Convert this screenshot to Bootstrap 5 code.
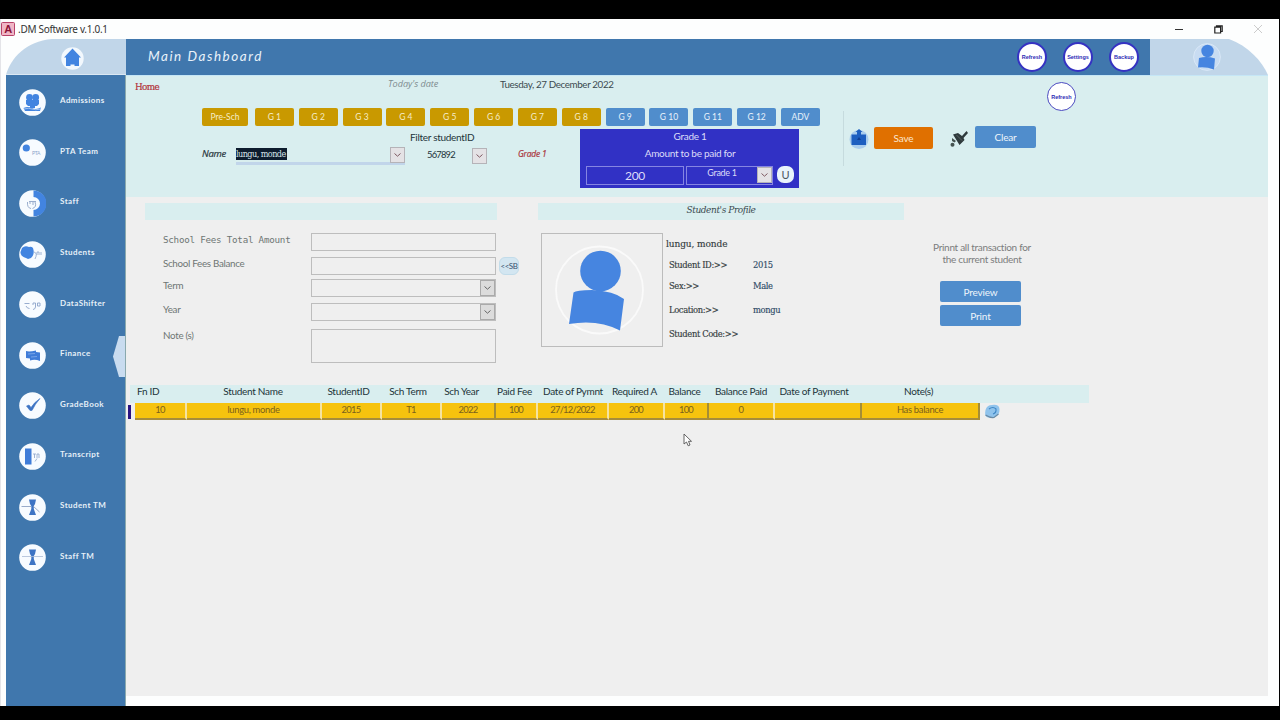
<!DOCTYPE html>
<html lang="en">
<head>
  <meta charset="UTF-8" />
  <meta name="viewport" content="width=device-width, initial-scale=1" />
  <title>.DM Software v.1.0.1</title>
  <link href="https://cdn.jsdelivr.net/npm/bootstrap@5.3.0/dist/css/bootstrap.min.css" rel="stylesheet" />
  <style>
    body {
      background: #000;
      font-family: Lato, "Open Sans", sans-serif;
      font-size: 10px;
      line-height: 13px;
      letter-spacing: -.3px;
      color: #3b4a50;
      height: 720px;
      padding-top: 19px;
      overflow: hidden;
      white-space: nowrap;
    }
    svg { display: block; flex: none; }
    .serif { font-family: "DejaVu Serif Condensed", "DejaVu Serif", serif; font-stretch: condensed; }
    .app-window {
      width: 1279px;
      height: 687px;
      background: #fdfefe;
      border-left: 1px solid #e4e4e8;
    }
    .title-bar { height: 20px; }
    .title-bar .app-name { font: 10px "Noto Sans", sans-serif; letter-spacing: -.3px; color: #333; margin-left: 3px; }
    .win-buttons { margin-right: 17px; gap: 31px; }
    .app-body { height: 667px; padding-left: 5px; }

    /* sidebar */
    .side-bar { width: 120px; background: #4077ad; border-right: 1px solid #8aa9ae; }
    .side-corner { background: #fdfefe; height: 36px; width: 120px; }
    .side-home {
      height: 36px;
      background: #c1d6e9;
      border-bottom: 1px solid #dbe8f3;
      clip-path: path("M0 36 C4 20 20 2 46 0 L120 0 L120 36 Z");
      padding-left: 12px;
      padding-top: 3px;
    }
    .side-list { padding-top: 2px; }
    .side-item { height: 50.6px; padding-left: 13px; position: relative; }
    .side-item span {
      font: bold 8px "Lato", sans-serif;
      letter-spacing: .42px;
      color: #e6f0f8;
      margin-left: 14px;
      margin-bottom: 4px;
    }
    .side-item .active-tab { position: absolute; right: 0; top: 6px; }

    /* header */
    .main-col { width: 1142px; }
    .top-bar { height: 36px; background: #4077ad; padding-right: 11px; }
    .top-bar h1 {
      font: italic 13.5px "Lato", sans-serif;
      letter-spacing: 1.55px;
      color: #e9f2fa;
      padding-left: 22px;
      margin: 0 auto 3px 0;
    }
    .round-btn {
      width: 30px;
      height: 30px;
      border: 2px solid #3532c2;
      border-radius: 50%;
      background: #fff;
      color: #2d2bb5;
      font: bold 5.5px "Liberation Sans", sans-serif;
      padding: 0;
    }
    .round-btn.thin { border: 1.5px solid #4a4ac0; width: 29px; height: 29px; }
    .user-corner {
      width: 118px;
      height: 36px;
      background: #c1d6e9;
      clip-path: path("M0 0 L79 0 C98 7 112 22 118 36 L0 36 Z");
      padding-right: 4px;
    }

    /* filter panel */
    .filter-panel { height: 122px; background: #d9eeef; border-top: 1px solid #c5e6f6; }
    .filter-left { width: 717px; }
    .crumb-row { height: 32px; }
    .home-link { color: #b23038; font-size: 9.8px; width: 262px; padding: 4px 0 0 9px; letter-spacing: -.6px; -webkit-text-stroke: .2px; }
    .today-label { font: italic 9.2px/13px "Open Sans", sans-serif; letter-spacing: -.05px; color: #7e8c90; width: 112px; padding-top: 1px; }
    .today-date { font-size: 9.8px; letter-spacing: -.37px; padding-top: 2px; }
    .grade-row { padding-left: 76px; gap: 4.85px; }
    .grade-btn {
      width: 39px;
      height: 18px;
      border-radius: 2px;
      background: #c99900;
      color: #f5ecc9;
      font-size: 8.5px;
      line-height: 18px;
      padding: 0;
      border: 0;
    }
    .grade-btn:first-child { width: 46px; margin-right: 2px; }
    .grade-btn.senior { background: #508dcc; color: #e8f2fb; }
    .filter-row { padding: 3px 0 0 76px; }
    .name-label { font: italic 9.5px/13px "Open Sans", sans-serif; color: #27343a; width: 34px; margin-top: 18px; -webkit-text-stroke: .2px; }
    .name-combo { width: 169px; height: 18px; margin-top: 18px; border-bottom: 3px solid #c1d5ea; }
    .name-combo .picked { background: #0d1c2e; color: #d9e4ea; font-size: 9px; line-height: 12px; letter-spacing: -.55px; height: 12px; margin-top: 1px; width: 51px; }
    .drop-btn {
      width: 15px;
      height: 16px;
      background: #e4e2e5;
      border: 1px solid #b5b3b8;
      padding: 0;
    }
    .id-filter { margin-left: 5px; width: 107px; padding-top: 2px; color: #22343a; }
    .id-filter .id-value { font-size: 9.4px; letter-spacing: -.8px; width: 62px; padding: 4px 0 0 17px; }
    .grade-mark { font: italic 8.5px/13px "Open Sans", sans-serif; letter-spacing: -.2px; color: #a9343c; width: 63px; margin-top: 18px; padding-left: 1px; -webkit-text-stroke: .2px; }
    .amount-box { width: 219px; height: 59px; background: #3131c5; color: #dcdcf8; text-align: center; padding: 1px 5px 0 6px; }
    .amount-box .amount-line { line-height: 12px; padding-bottom: 7px; }
    .amount-field { border: 1px solid #8585e2; height: 19px; }
    .amount-field.sum { width: 98px; font-size: 12px; line-height: 18px; }
    .amount-field.level { width: 87px; font-size: 9px; line-height: 12px; margin-left: 2px; }
    .u-btn { width: 17px; height: 17px; border-radius: 7px; background: #e9f3fb; color: #4a5560; border: 0; padding: 0; font-size: 11px; line-height: 17px; margin: 0 0 0 4px; }
    .tool-area { padding: 6px 0 0; }
    .tool-area .thin { margin-left: 204px; }
    .tool-row { height: 55px; border-left: 1px solid #c6dbde; padding-left: 5px; }
    .tool-row .btn, .print-box .btn { font-size: 10px; letter-spacing: -.15px; line-height: 20px; height: 22px; border-radius: 2px; padding: 0; border: 0; color: #eef5fb; background: #508dcc; }
    .tool-row .save-btn { width: 59px; margin: 0 17px 2px 5px; background: #e07000; color: #fbe6cd; }
    .tool-row .clear-btn { width: 61px; margin: 0 0 3px 7px; }

    /* work area */
    .work-area { height: 499px; background: #efefef; padding-top: 6px; }
    .band { height: 17px; background: #d9eeef; line-height: 14px; text-align: center; margin-bottom: 13px; }
    .fees-box { width: 378px; margin-left: 19px; }
    .fees-box .band { width: 352px; }
    .fees-grid {
      display: grid;
      grid-template-columns: 148px 185px auto;
      grid-template-rows: 24px 22px 24px 26px 34px;
      margin-left: 18px;
      color: #6e7674;
      font-size: 9.8px;
    }
    .fees-grid .mono { font: 9.2px/13px "DejaVu Sans Mono", monospace; letter-spacing: -.22px; }
    .entry { border: 1px solid #bdbdbd; height: 18px; }
    .entry.tall { height: 34px; }
    .entry .drop-btn { background: #dcdcdc; border-color: #aaa; }
    .sb-btn { width: 20px; height: 18px; margin-left: 3px; border: 1px solid #c2dcea; border-radius: 6px; background: #d3e6f1; color: #39516f; font-size: 8px; letter-spacing: -.5px; line-height: 15px; padding: 0; }
    .profile-box { width: 366px; margin-left: 15px; }
    .profile-box .band { letter-spacing: -.42px; }
    .photo-frame { width: 122px; height: 114px; border: 1px solid #bcbcbc; margin-left: 3px; }
    .profile-list { font-size: 9.3px; letter-spacing: -.38px; color: #333b3d; margin-left: 3px; padding-top: 4px; -webkit-text-stroke: .15px; }
    .profile-list .full-name { font-size: 10px; letter-spacing: -.1px; }
    .profile-list div { display: flex; padding-left: 3px; }
    .profile-list .label-cell { width: 84px; }
    .profile-list .value-cell { color: #2d4a66; }
    .profile-list .far { padding-top: 11px; }
    .print-box { margin: 38px 0 0 28px; width: 100px; text-align: center; color: #7b7d7d; line-height: 12px; }
    .print-box .btn { width: 81px; height: 21px; margin-left: 8px; }
    .print-box .btn + .btn { margin-top: 3px; }

    /* payments table */
    .pay-block { margin-top: 22px; }
    .pay-grid {
      display: grid;
      grid-template-columns: 52px 135px 60px 60px 54px 42px 71px 56px 44px 66px 87px 118px;
      text-align: center;
    }
    .pay-head {
      background: #d9eeef;
      margin-left: 4px;
      padding-left: 5px;
      width: 959px;
      height: 18px;
      color: #22343a;
      grid-template-columns: 53px 130px 61px 58px 49px 57px 60px 63px 37px 76px 70px 139px;
    }
    .pay-head > span:first-child { text-align: left; padding-left: 2px; }
    .pay-row { height: 17px; }
    .pay-row .pay-grid > span {
      background: #f6c30e;
      height: 17px;
      border-right: 2px solid #f5e3a0;
      border-bottom: 2px solid #a68c3c;
      color: #7a611c;
      font-size: 9.4px;
      line-height: 13px;
      padding: 0;
    }
    .pay-row .pay-grid > span.num { letter-spacing: -.75px; }
    .pay-row .pay-grid > span.edge { border-right: 2px solid #a58d35; }
    .row-mark { width: 3px; height: 14px; background: #2a1380; margin: 2px 4px 0 2px; }
    .mouse-pointer { position: absolute; left: 683px; top: 433px; }
  </style>
</head>
<body>
<div class="app-window">

  <!-- Title bar -->
  <div class="title-bar d-flex align-items-center">
    <svg width="14" height="14" viewBox="0 0 14 14">
      <rect x=".5" y=".5" width="13" height="13" rx="1" fill="#f0b6c6" stroke="#b8436a" />
      <text x="3.200" y="11" font-family="Liberation Sans" font-weight="bold" font-size="11" fill="#8c1238">A</text>
    </svg>
    <span class="app-name me-auto">.DM Software v.1.0.1</span>
    <div class="win-buttons d-flex align-items-center">
      <svg width="8" height="9"><path d="M0 4.5 H8" stroke="#333" /></svg>
      <svg width="9" height="9" viewBox="0 0 9 9"><path d="M.8 2.2 H6.6 V8 H.8 Z M2.5 2 V.8 H8.2 V6.5 H7" fill="none" stroke="#222" stroke-width="1.2" /></svg>
      <svg width="8" height="8"><path d="M0 0 L8 8 M8 0 L0 8" stroke="#ccc" /></svg>
    </div>
  </div>

  <div class="app-body d-flex">
    <!-- Sidebar -->
    <nav class="side-bar flex-shrink-0">
      <div class="side-corner">
        <div class="side-home d-flex align-items-center justify-content-center">
          <svg width="23" height="23" viewBox="0 0 23 23">
            <circle cx="11.5" cy="11.5" r="11.2" fill="#f2f8fd" />
            <path d="M11.5 1.5 L20 10.5 H18 V19 H13.5 V17.5 H9.5 V19 H5 V10.5 H3 Z" fill="#4284e0" />
          </svg>
        </div>
      </div>
      <div class="side-list">
        <div class="side-item d-flex align-items-center">
          <svg width="27" height="27" viewBox="0 0 27 27"><circle cx="13.5" cy="13.5" r="13.3" fill="#f7fbff" /><circle cx="10.5" cy="8.5" r="3.4" fill="#4284e0" /><circle cx="16.7" cy="8.5" r="3.4" fill="#4284e0" /><path d="M7 11 H20 V15 L18 17 H9 L7 15 Z M11 15 H16 V19 H11 Z M4.5 19 Q9 17 13 19 T22 18.5 L21 22 H6 Z" fill="#4284e0" /><path d="M5 20 Q10 18.5 13 20 T22 20" fill="none" stroke="#dbe9fa" stroke-width=".6" /></svg>
          <span>Admissions</span>
        </div>
        <div class="side-item d-flex align-items-center">
          <svg width="27" height="27" viewBox="0 0 27 27"><circle cx="13.5" cy="13.5" r="13.3" fill="#f7fbff" /><circle cx="7.3" cy="9" r="3.6" fill="#4284e0" /><text x="13" y="15.5" font-size="5" fill="#8ba3c9">PTA</text></svg>
          <span>PTA Team</span>
        </div>
        <div class="side-item d-flex align-items-center">
          <svg width="27" height="27" viewBox="0 0 27 27"><circle cx="13.5" cy="13.5" r="13.3" fill="#f7fbff" /><path d="M14.5 .5 A13 13 0 0 1 14.5 26.5 V20 A6.5 6.5 0 0 0 14.5 7 Z" fill="#4284e0" /><path d="M8.5 12 Q8 18 12 18.5 M10 11.5 H17 M11 14 V12 M14 15 V12 M16 12 Q18 17 13.5 18.5" fill="none" stroke="#8299c0" stroke-width=".8" /></svg>
          <span>Staff</span>
        </div>
        <div class="side-item d-flex align-items-center">
          <svg width="27" height="27" viewBox="0 0 27 27"><circle cx="13.5" cy="13.5" r="13.3" fill="#f7fbff" /><path d="M3 7 Q6 4 10 6 Q14 5 14.5 9 Q15.5 14 12 17 L9 18 L7 17 Q1 15 1.5 11 Z" fill="#4284e0" /><path d="M15 11 Q19 12 16 18 M18 14 V11 H20 V14 M22 11 V14" fill="none" stroke="#8ba3c9" stroke-width=".8" /></svg>
          <span>Students</span>
        </div>
        <div class="side-item d-flex align-items-center">
          <svg width="27" height="27" viewBox="0 0 27 27"><circle cx="13.5" cy="13.5" r="13.3" fill="#f7fbff" /><path d="M5.5 12.5 H10.5 M7 15 Q8 17.5 10.5 17.5 M14 14 V12 H16.5 V16 Q16 18.5 14 18.5 M18.5 15 V12 H21 V15 Z" fill="none" stroke="#8ba3c9" stroke-width=".9" /></svg>
          <span>DataShifter</span>
        </div>
        <div class="side-item d-flex align-items-center">
          <svg width="27" height="27" viewBox="0 0 27 27"><circle cx="13.5" cy="13.5" r="13.3" fill="#f7fbff" /><path d="M7 9 Q10 10 17 8.5 V10 L21 10.5 V19 Q16 17 11 18.5 V16.5 L7 16 Z" fill="#3f7cd8" /><path d="M9 12 L16 11.5 M12 15 L18 14.5" stroke="#8eb4ee" stroke-width=".7" /></svg>
          <span>Finance</span>
          <svg class="active-tab" width="12" height="41" viewBox="0 0 12 41"><path d="M12 0 H6 L0 20.5 L6 41 H12 Z" fill="#c9dcf0" /></svg>
        </div>
        <div class="side-item d-flex align-items-center">
          <svg width="27" height="27" viewBox="0 0 27 27"><circle cx="13.5" cy="13.5" r="13.3" fill="#f7fbff" /><path d="M7.5 14 L10 13 L12 15.5 Q15.500 10 21 6.500 Q16 12 13 18.500 H11 Z" fill="#3d74c4" stroke="#3d74c4" stroke-width=".6" /></svg>
          <span>GradeBook</span>
        </div>
        <div class="side-item d-flex align-items-center">
          <svg width="27" height="27" viewBox="0 0 27 27"><circle cx="13.5" cy="13.5" r="13.3" fill="#f7fbff" /><rect x="6" y="5.5" width="6.5" height="16" fill="#3f7cd8" /><path d="M14 11 H17 M15.5 11 V15 M18 15 V11 H20 V15 M16 18.5 L18 15.5" fill="none" stroke="#8ba3c9" stroke-width=".8" /></svg>
          <span>Transcript</span>
        </div>
        <div class="side-item d-flex align-items-center">
          <svg width="27" height="27" viewBox="0 0 27 27"><circle cx="13.5" cy="13.5" r="13.3" fill="#f7fbff" /><path d="M10 5.5 H17 L16 10 L14.8 12 V15 L17 21 H10 L12.3 15 V12 L11 10 Z" fill="#3d74c4" /><path d="M2.5 12.5 H12 M14 12 L20.5 18" stroke="#7f97bd" stroke-width=".8" /></svg>
          <span>Student TM</span>
        </div>
        <div class="side-item d-flex align-items-center">
          <svg width="27" height="27" viewBox="0 0 27 27"><circle cx="13.5" cy="13.5" r="13.3" fill="#f7fbff" /><path d="M10 5.5 H17 L16 10 L14.8 12 V15 L17 21 H10 L12.3 15 V12 L11 10 Z" fill="#3d74c4" /><path d="M3 12.5 H24" stroke="#a9bbd6" stroke-width=".8" /></svg>
          <span>Staff TM</span>
        </div>
      </div>
    </nav>

    <main class="main-col">
      <!-- Header -->
      <header class="d-flex">
        <div class="top-bar d-flex align-items-center flex-grow-1">
          <h1>Main Dashboard</h1>
          <button class="round-btn">Refresh</button>
          <button class="round-btn ms-3 me-3">Settings</button>
          <button class="round-btn">Backup</button>
        </div>
        <div class="user-corner d-flex align-items-center justify-content-center">
          <svg width="28" height="28" viewBox="0 0 28 28">
            <circle cx="14" cy="14" r="13.4" fill="#c8dcf2" stroke="#d8e7f6" />
            <circle cx="14.5" cy="8" r="6.2" fill="#4685e0" />
            <path d="M6 15 Q14 13 22 15.5 L21 26.5 Q13 23.5 5 24.5 Z" fill="#4685e0" />
          </svg>
        </div>
      </header>

      <!-- Filters -->
      <section class="filter-panel d-flex">
        <div class="filter-left">
          <div class="crumb-row d-flex">
            <div class="home-link serif">Home</div>
            <div class="today-label">Today's date</div>
            <div class="today-date">Tuesday, 27 December 2022</div>
          </div>
          <div class="grade-row d-flex">
            <button class="grade-btn">Pre-Sch</button>
            <button class="grade-btn">G 1</button>
            <button class="grade-btn">G 2</button>
            <button class="grade-btn">G 3</button>
            <button class="grade-btn">G 4</button>
            <button class="grade-btn">G 5</button>
            <button class="grade-btn">G 6</button>
            <button class="grade-btn">G 7</button>
            <button class="grade-btn">G 8</button>
            <button class="grade-btn senior">G 9</button>
            <button class="grade-btn senior">G 10</button>
            <button class="grade-btn senior">G 11</button>
            <button class="grade-btn senior">G 12</button>
            <button class="grade-btn senior">ADV</button>
          </div>
          <div class="filter-row d-flex">
            <div class="name-label">Name</div>
            <div class="name-combo d-flex justify-content-between">
              <span class="picked serif">lungu, monde</span>
              <button class="drop-btn d-flex align-items-center justify-content-center"><svg width="7" height="4"><path d="M.5 .5 L3.5 3.2 L6.5 .5" fill="none" stroke="#7d5a62" /></svg></button>
            </div>
            <div class="id-filter">
              <div>Filter studentID</div>
              <div class="d-flex">
                <span class="id-value">567892</span>
                <button class="drop-btn mt-1 d-flex align-items-center justify-content-center"><svg width="7" height="4"><path d="M.5 .5 L3.5 3.2 L6.5 .5" fill="none" stroke="#7d5a62" /></svg></button>
              </div>
            </div>
            <div class="grade-mark">Grade 1</div>
            <div class="amount-box">
              <div>Grade 1</div>
              <div class="amount-line pt-1">Amount to be paid for</div>
              <div class="d-flex">
                <div class="amount-field sum">200</div>
                <div class="amount-field level d-flex justify-content-between"><span class="flex-grow-1">Grade 1</span><button class="drop-btn d-flex align-items-center justify-content-center"><svg width="7" height="4"><path d="M.5 .5 L3.5 3.2 L6.5 .5" fill="none" stroke="#7d5a62" /></svg></button></div>
                <button class="u-btn">U</button>
              </div>
            </div>
          </div>
        </div>

        <div class="tool-area">
          <button class="round-btn thin d-block">Refresh</button>
          <div class="tool-row d-flex align-items-center">
            <svg width="20" height="20" viewBox="0 0 20 20">
              <circle cx="10" cy="10.5" r="9.5" fill="#a9cdee" />
              <path d="M2.5 5.5 H8 V3 H6.5 L10 0 L13.5 3 H12 V5.5 H17 V16 H2.5 Z" fill="#1d5fc0" />
              <path d="M10 8 L12 11 H8 Z" fill="#0f3f94" />
            </svg>
            <button class="btn save-btn">Save</button>
            <svg width="18" height="18" viewBox="0 0 18 18">
              <path d="M3 4.5 L8 3 L12 6 L16.5 1 L18 3 L13.500 8 L14.500 10 L9.500 15 Z" fill="#2f3a3c" />
              <path d="M6.5 5 L12 10.5" stroke="#66706f" stroke-width=".8" />
              <path d="M2 8 L6 11 L4.500 12.500 L2 11 Z" fill="#44514f" /><circle cx="2.5" cy="14.800" r="2" fill="#44514f" />
            </svg>
            <button class="btn clear-btn">Clear</button>
          </div>
        </div>
      </section>

      <!-- Work area -->
      <section class="work-area">
        <div class="d-flex">
          <div class="fees-box">
            <div class="band"></div>
            <div class="fees-grid">
              <span class="mono">School Fees Total Amount</span><div class="entry"></div><i></i>
              <span>School Fees Balance</span><div class="entry"></div><button class="sb-btn">&lt;&lt;SB</button>
              <span>Term</span><div class="entry d-flex justify-content-end"><button class="drop-btn d-flex align-items-center justify-content-center"><svg width="7" height="4"><path d="M.5 .5 L3.5 3.2 L6.5 .5" fill="none" stroke="#666" /></svg></button></div><i></i>
              <span>Year</span><div class="entry d-flex justify-content-end"><button class="drop-btn d-flex align-items-center justify-content-center"><svg width="7" height="4"><path d="M.5 .5 L3.5 3.2 L6.5 .5" fill="none" stroke="#666" /></svg></button></div><i></i>
              <span>Note (s)</span><div class="entry tall"></div><i></i>
            </div>
          </div>

          <div class="profile-box">
            <div class="band serif fst-italic">Student's Profile</div>
            <div class="d-flex">
              <div class="photo-frame">
                <svg width="120" height="112" viewBox="0 0 120 112">
                  <circle cx="57.5" cy="56" r="43.5" fill="none" stroke="#fafafa" stroke-width="1.8" />
                  <circle cx="58.5" cy="37" r="20.3" fill="#4685e0" />
                  <path d="M31.5 58.5 Q34 56 50 56 Q72 57 82 65 L78 96.5 Q56 85 27 90 Z" fill="#4685e0" />
                </svg>
              </div>
              <div class="profile-list serif">
                <span class="full-name">lungu, monde</span>
                <div class="pt-2"><span class="label-cell">Student ID:&gt;&gt;</span><span class="value-cell">2015</span></div>
                <div class="pt-2"><span class="label-cell">Sex:&gt;&gt;</span><span class="value-cell">Male</span></div>
                <div class="far"><span class="label-cell">Location:&gt;&gt;</span><span class="value-cell">mongu</span></div>
                <div class="far"><span class="label-cell">Student Code:&gt;&gt;</span></div>
              </div>
            </div>
          </div>

          <div class="print-box">
            Prinnt all transaction for<br />the current student
            <button class="btn d-block mt-3">Preview</button>
            <button class="btn d-block">Print</button>
          </div>
        </div>

        <!-- Payments -->
        <div class="pay-block">
          <div class="pay-grid pay-head">
            <span>Fn ID</span><span>Student Name</span><span>StudentID</span><span>Sch Term</span><span>Sch Year</span><span>Paid Fee</span><span>Date of Pymnt</span><span>Required A</span><span>Balance</span><span>Balance Paid</span><span>Date of Payment</span><span>Note(s)</span>
          </div>
          <div class="pay-row d-flex">
            <div class="row-mark"></div>
            <div class="pay-grid">
              <span class="num">10</span><span>lungu, monde</span><span class="num">2015</span><span class="num">T1</span><span class="num edge">2022</span><span class="num">100</span><span class="num">27/12/2022</span><span class="num">200</span><span class="num edge">100</span><span>0</span><span class="edge"></span><span class="edge">Has balance</span>
            </div>
            <svg class="ms-1" width="16" height="16" viewBox="0 0 16 16">
              <path d="M1.500 7 Q3 2 8 2 Q15 1 15.500 6 Q16 12 10 14.500 H4 Q0 14 1.500 7 Z" fill="#8fc3ec" />
              <path d="M1.500 12 Q6 15 10 14.500 L14.500 11" fill="none" stroke="#6a8ba5" stroke-width="1.200" />
              <path d="M5 6 Q9 3 12 6 Q12.500 10 9 11" fill="none" stroke="#3f86c4" stroke-width="1.100" />
            </svg>
          </div>
        </div>
      </section>
    </main>
  </div>
</div>

<svg class="mouse-pointer" width="10" height="14" viewBox="0 0 10 14"><path d="M1 1 V11 L3.5 9 L5.2 12.8 L7 12 L5.5 8.3 H8.5 Z" fill="#fff" stroke="#555" stroke-width=".9" /></svg>

<script src="https://cdn.jsdelivr.net/npm/bootstrap@5.3.0/dist/js/bootstrap.bundle.min.js"></script>
</body>
</html>
